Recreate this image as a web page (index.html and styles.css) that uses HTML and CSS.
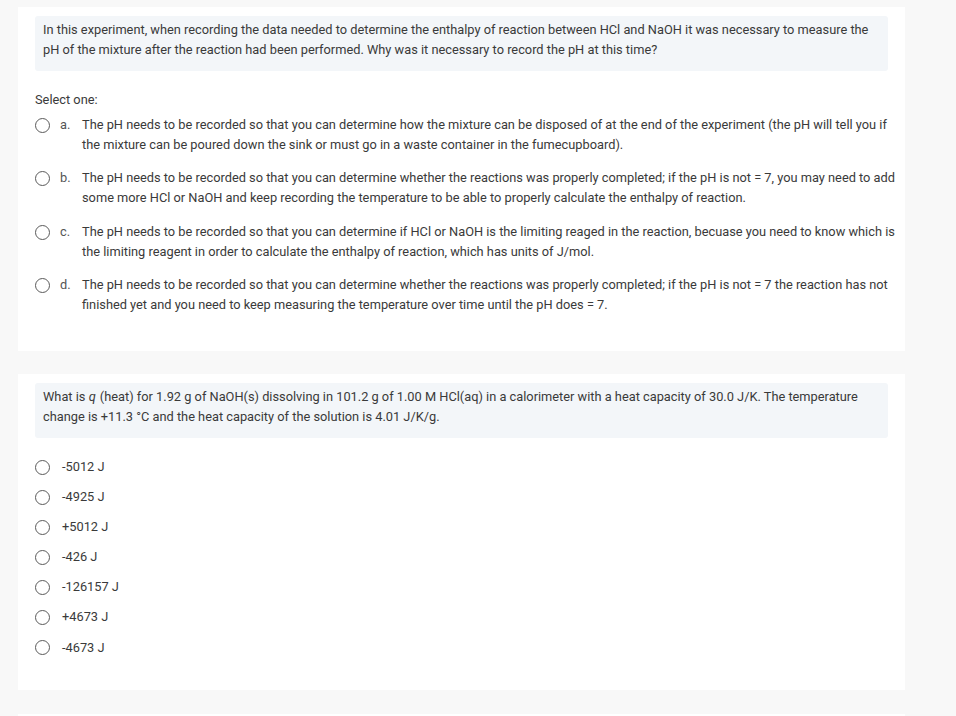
FILE: index.html
```html
<!DOCTYPE html>
<html>
<head>
<meta charset="utf-8">
<link rel="stylesheet" href="styles.css">
</head>
<body>
<div class="page">
  <section class="card card-first">
    <div class="qtext">In this experiment, when recording the data needed to determine the enthalpy of reaction between HCl and NaOH it was necessary to measure the pH of the mixture after the reaction had been performed. Why was it necessary to record the pH at this time?</div>
    <div class="prompt">Select one:</div>
    <div class="options">
      <div class="opt"><span class="radio"></span><span class="letter">a.</span><span class="otext">The pH needs to be recorded so that you can determine how the mixture can be disposed of at the end of the experiment (the pH will tell you if the mixture can be poured down the sink or must go in a waste container in the fumecupboard).</span></div>
      <div class="opt"><span class="radio"></span><span class="letter">b.</span><span class="otext">The pH needs to be recorded so that you can determine whether the reactions was properly completed; if the pH is not = 7, you may need to add some more HCl or NaOH and keep recording the temperature to be able to properly calculate the enthalpy of reaction.</span></div>
      <div class="opt"><span class="radio"></span><span class="letter">c.</span><span class="otext">The pH needs to be recorded so that you can determine if HCl or NaOH is the limiting reaged in the reaction, becuase you need to know which is the limiting reagent in order to calculate the enthalpy of reaction, which has units of J/mol.</span></div>
      <div class="opt"><span class="radio"></span><span class="letter">d.</span><span class="otext">The pH needs to be recorded so that you can determine whether the reactions was properly completed; if the pH is not = 7 the reaction has not finished yet and you need to keep measuring the temperature over time until the pH does = 7.</span></div>
    </div>
  </section>
  <section class="card card-second">
    <div class="qtext">What is <i class="var">q</i> (heat) for 1.92 g of NaOH(s) dissolving in 101.2 g of 1.00 M HCl(aq) in a calorimeter with a heat capacity of 30.0 J/K. The temperature change is +11.3 °C and the heat capacity of the solution is 4.01 J/K/g.</div>
    <div class="answers">
      <div class="ans"><span class="radio"></span><span>-5012 J</span></div>
      <div class="ans"><span class="radio"></span><span>-4925 J</span></div>
      <div class="ans"><span class="radio"></span><span>+5012 J</span></div>
      <div class="ans"><span class="radio"></span><span>-426 J</span></div>
      <div class="ans"><span class="radio"></span><span>-126157 J</span></div>
      <div class="ans"><span class="radio"></span><span>+4673 J</span></div>
      <div class="ans"><span class="radio"></span><span>-4673 J</span></div>
    </div>
  </section>
  <section class="card card-third"></section>
</div>
</body>
</html>
```
FILE: styles.css
```css
html, body {
  margin: 0;
  padding: 0;
  background: #f8f8f8;
}
body {
  font-family: Roboto, "Liberation Sans", Arial, sans-serif;
  font-size: 12.8px;
  line-height: 20px;
  color: #3a3a3a;
  height: 716px;
  overflow: hidden;
}
.page {
  padding: 7px 0 0 18px;
  width: 887px;
  display: flex;
  flex-direction: column;
  gap: 23px;
}
.card {
  background: #fff;
  padding: 9px 17px 0 17px;
}
.card-first {
  height: 335px;
}
.card-second {
  height: 307px;
}
.card-third {
  height: 3px;
  margin-top: 1px;
}
.qtext {
  background: #f3f6f9;
  border-radius: 3px;
  padding: 4px 8px 11px 8px;
}
.var {
  padding-right: 1px;
}
.prompt {
  margin-top: 19px;
}
.options {
  margin-top: 5px;
  margin-right: -12px;
  display: flex;
  flex-direction: column;
  gap: 13.4px;
}
.opt {
  display: grid;
  grid-template-columns: 15px 12px 1fr;
  column-gap: 10px;
  align-items: start;
}
.radio {
  width: 15px;
  height: 15px;
  box-sizing: border-box;
  border: 1.5px solid #5a5a5a;
  border-radius: 50%;
  margin-top: 3px;
  display: inline-block;
}
.letter {
  color: #555;
}
.answers {
  margin-top: 19px;
  display: flex;
  flex-direction: column;
  gap: 10.1px;
}
.ans {
  display: flex;
  align-items: center;
  gap: 12px;
}
.ans .radio {
  margin-top: 0;
}
```
